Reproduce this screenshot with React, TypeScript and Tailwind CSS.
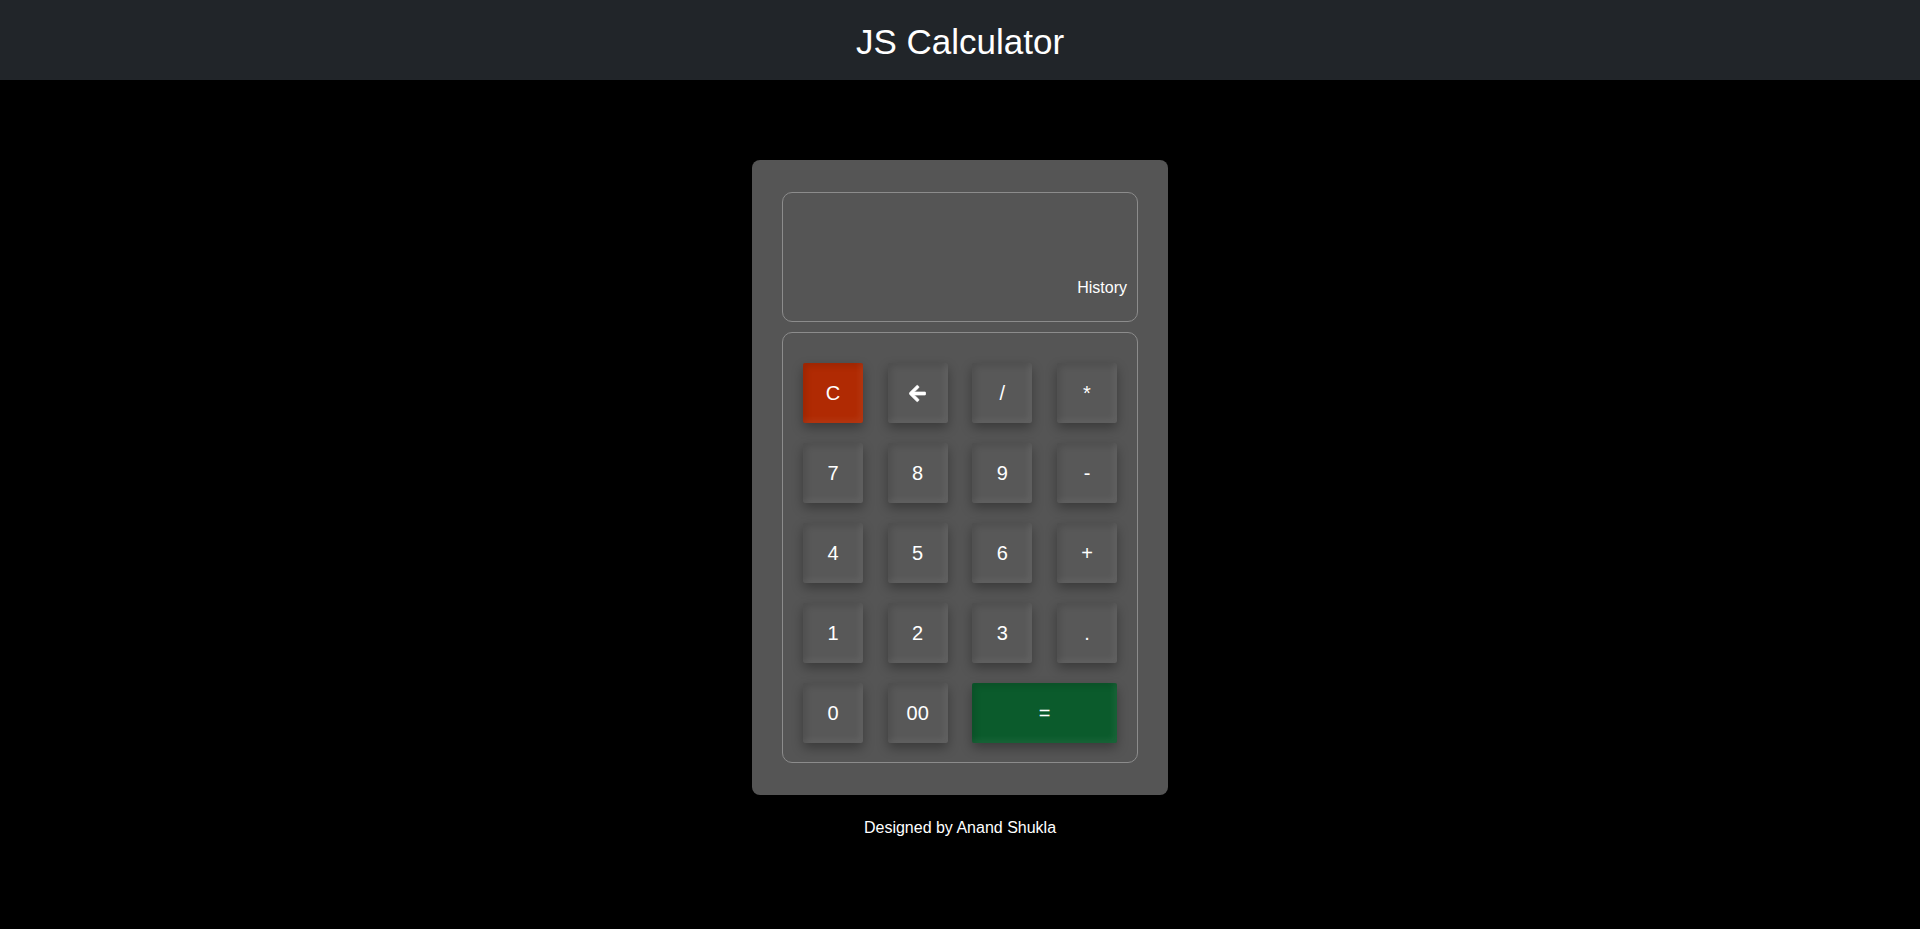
import React from 'react';

const font = { fontFamily: '"Liberation Sans", Arial, sans-serif' };

const keyShadow =
    'shadow-[0_5px_12px_rgba(0,0,0,0.32),inset_3px_3px_6px_rgba(0,0,0,0.12),inset_-3px_-3px_6px_rgba(255,255,255,0.07)]';

function ArrowLeft() {
    return (
        <svg viewBox="0 0 448 512" className="w-[17px] h-[19px]" fill="currentColor" stroke="currentColor" strokeWidth={20}>
            <path d="M257.5 445.1l-22.2 22.2c-9.4 9.4-24.6 9.4-33.9 0L7 273c-9.4-9.4-9.4-24.6 0-33.9L201.4 44.7c9.4-9.4 24.6-9.4 33.9 0l22.2 22.2c9.5 9.5 9.3 25-.4 34.3L136.6 216H424c13.3 0 24 10.7 24 24v32c0 13.3-10.7 24-24 24H136.6l120.5 114.8c9.8 9.3 10 24.8.4 34.3z" />
        </svg>
    );
}

interface KeyProps {
    children: React.ReactNode;
    variant?: 'default' | 'clear' | 'equals';
    wide?: boolean;
}

const Key: React.FC<KeyProps> = ({ children, variant = 'default', wide }) => {
    const bg =
        variant === 'clear'
            ? 'bg-[#b02a03]'
            : variant === 'equals'
            ? 'bg-[#0b5b2c]'
            : 'bg-[#585858]';
    return (
        <button
            className={`h-[60px] ${wide ? 'col-span-2 w-full' : 'w-[60px]'} ${bg} ${keyShadow} rounded-[2px] flex items-center justify-center text-white text-[20px] leading-none`}
        >
            {children}
        </button>
    );
};

export default function App() {
    return (
        <div className="min-h-screen bg-black text-white" style={font}>
            {/* Header */}
            <header className="h-[80px] bg-[#212529] flex items-center justify-center pt-[3px]">
                <h1 className="text-[35px] leading-[42px] font-normal">JS Calculator</h1>
            </header>

            <main className="flex flex-col items-center pt-[80px]">
                {/* Calculator body */}
                <div className="w-[416px] bg-[#555555] rounded-[8px] px-[30px] py-[32px] flex flex-col gap-[10px]">
                    {/* Display */}
                    <div className="h-[130px] border border-[#8c8c8c] rounded-[10px] flex flex-col justify-end items-end pr-[10px] pb-[21px]">
                        <span className="text-[16px] leading-[24px]">History</span>
                    </div>

                    {/* Keypad */}
                    <div className="border border-[#8c8c8c] rounded-[10px] pl-[20px] pr-[20px] pt-[30px] pb-[19px]">
                        <div className="grid grid-cols-[60px_60px_60px_60px] justify-between gap-y-[20px]">
                            <Key variant="clear">C</Key>
                            <Key>
                                <ArrowLeft />
                            </Key>
                            <Key>/</Key>
                            <Key>*</Key>

                            <Key>7</Key>
                            <Key>8</Key>
                            <Key>9</Key>
                            <Key>-</Key>

                            <Key>4</Key>
                            <Key>5</Key>
                            <Key>6</Key>
                            <Key>+</Key>

                            <Key>1</Key>
                            <Key>2</Key>
                            <Key>3</Key>
                            <Key>.</Key>

                            <Key>0</Key>
                            <Key>00</Key>
                            <Key variant="equals" wide>
                                =
                            </Key>
                        </div>
                    </div>
                </div>

                {/* Footer */}
                <p className="mt-[21px] text-[16px] leading-[24px]">Designed by Anand Shukla</p>
            </main>
        </div>
    );
}
